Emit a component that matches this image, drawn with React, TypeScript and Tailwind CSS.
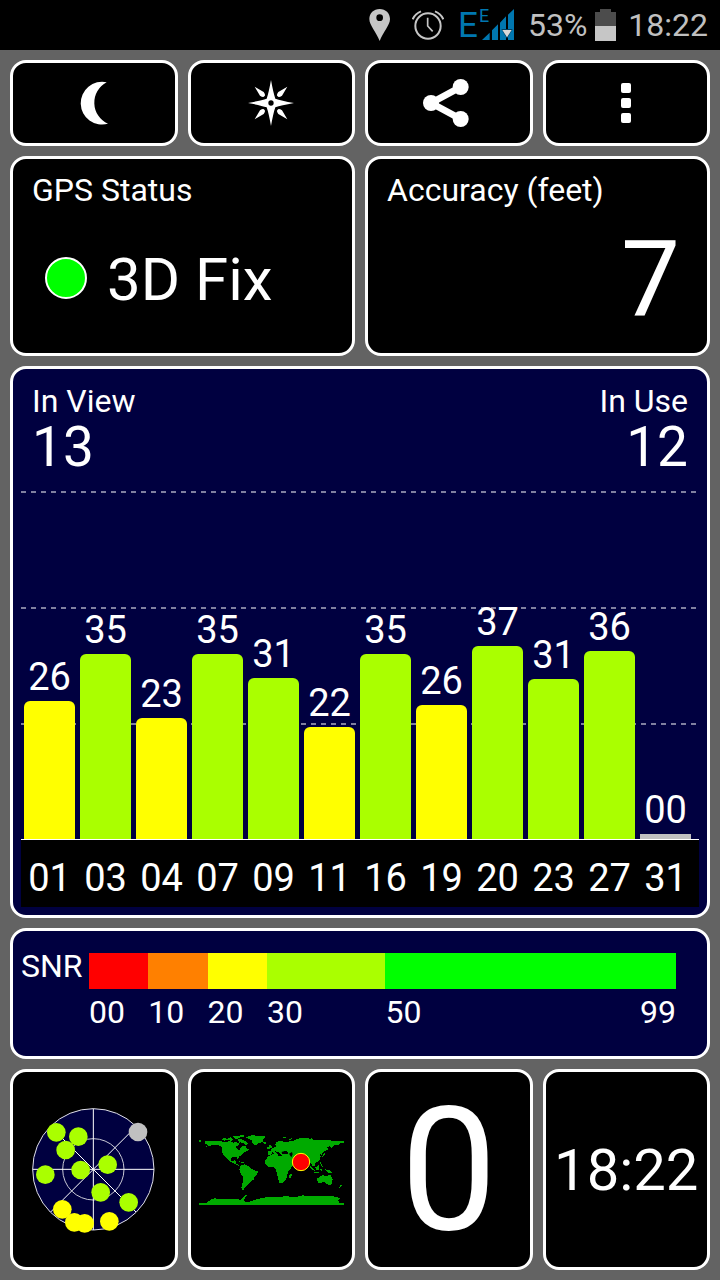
import type { ReactNode } from 'react';

const satellites = [
  { id: '01', snr: '26', height: 138, color: 'bg-[#ffff00]' },
  { id: '03', snr: '35', height: 185, color: 'bg-[#aaff00]' },
  { id: '04', snr: '23', height: 121, color: 'bg-[#ffff00]' },
  { id: '07', snr: '35', height: 185, color: 'bg-[#aaff00]' },
  { id: '09', snr: '31', height: 161, color: 'bg-[#aaff00]' },
  { id: '11', snr: '22', height: 112, color: 'bg-[#ffff00]' },
  { id: '16', snr: '35', height: 185, color: 'bg-[#aaff00]' },
  { id: '19', snr: '26', height: 134, color: 'bg-[#ffff00]' },
  { id: '20', snr: '37', height: 193, color: 'bg-[#aaff00]' },
  { id: '23', snr: '31', height: 160, color: 'bg-[#aaff00]' },
  { id: '27', snr: '36', height: 188, color: 'bg-[#aaff00]' },
  { id: '31', snr: '00', height: 5, color: 'bg-[#c0c0c0]' },
];

const snrRanges = [
  { from: '00', span: 10, color: 'bg-[#ff0000]' },
  { from: '10', span: 10, color: 'bg-[#ff8000]' },
  { from: '20', span: 10, color: 'bg-[#ffff00]' },
  { from: '30', span: 20, color: 'bg-[#aaff00]' },
  { from: '50', to: '99', span: 49, color: 'bg-[#00ff00]' },
];

const skyDots = [
  [169, 217, '#aaff00'],
  [235, 230, '#aaff00'],
  [197, 270, '#aaff00'],
  [136, 344, '#aaff00'],
  [242, 330, '#aaff00'],
  [323, 314, '#aaff00'],
  [302, 397, '#aaff00'],
  [386, 427, '#aaff00'],
  [414, 216, '#c0c0c0'],
  [187, 448, '#ffff00'],
  [223, 487, '#ffff00'],
  [254, 490, '#ffff00'],
  [328, 484, '#ffff00'],
] as const;

function StatusBar() {
  return (
    <header className="flex h-[50px] items-center justify-end bg-black pr-3 text-[32px] leading-none text-[#c0c0c0]">
      <svg className="mr-[22px] h-8 w-[21px]" viewBox="57 27 63 96" aria-label="Location">
        <path
          fill="#c6c6c6"
          fillRule="evenodd"
          d="M89 27C71 27 58 40 58 57C58 76 79 96 89 123C99 96 120 76 120 57C120 40 107 27 89 27ZM89 43A10 10 0 1 1 89 63A10 10 0 1 1 89 43Z"
        />
      </svg>
      <svg className="mr-4 h-[30px] w-8" viewBox="187 31 96 90" fill="none" stroke="#c6c6c6" aria-label="Alarm">
        <circle cx="235" cy="79" r="38" strokeWidth="6" />
        <path d="M234 54V79L249 95" strokeWidth="5" />
        <path d="M189 59Q196 42 214 35M281 59Q274 42 256 35" strokeWidth="6" />
      </svg>
      <svg className="mr-[14px] h-8 w-[54px] overflow-visible" viewBox="330 24 162 96" fill="#0077b0" aria-label="Signal">
        <text x="324" y="107" fontSize="105" fontFamily="Roboto">E</text>
        <text x="387" y="63" fontSize="54" fontFamily="Roboto">E</text>
        <path d="M396 117L419 95V117ZM426 117V88L444 70V117ZM450 117V65L468 46V117ZM474 117V41L492 24V117Z" />
        <path d="M454 84H488L471 113Z" fill="#003f60" />
        <path d="M457 87H485L471 109Z" fill="#d8d8d8" />
      </svg>
      <span>53%</span>
      <svg className="mr-3 ml-2 h-8 w-[21px]" viewBox="0 0 21 32" aria-label="Battery">
        <path d="M0 3H5V0H16V3H21V17H0Z" fill="#4c4c4c" />
        <path d="M0 17H21V32H0Z" fill="#c6c6c6" />
      </svg>
      <span>18:22</span>
    </header>
  );
}

function Toolbar() {
  const button = 'flex h-[86px] items-center justify-center rounded-2xl border-3 border-white bg-black';
  return (
    <nav className="grid grid-cols-4 gap-[10px]">
      <button className={button} aria-label="Night mode">
        <svg className="h-[45px] w-7 overflow-visible" viewBox="237 92 85 135" fill="white">
          <path d="M318 95A65 65 0 1 0 322 221A70 70 0 0 1 318 95Z" />
        </svg>
      </button>
      <button className={button} aria-label="Compass">
        <svg className="size-[46px]" viewBox="-69 -69 138 138" fill="white">
          <path
            fillRule="evenodd"
            d="M0 -69Q7 -30 13 -13Q30 -7 69 0Q30 7 13 13Q7 30 0 69Q-7 30 -13 13Q-30 7 -69 0Q-30 -7 -13 -13Q-7 -30 0 -69ZM0 -8A8 8 0 1 0 0 8A8 8 0 1 0 0 -8Z"
          />
          <path d="M-49 -49L-22 -33Q-15 -23 -20 -20Q-23 -15 -33 -22Z" />
          <path d="M49 -49L22 -33Q15 -23 20 -20Q23 -15 33 -22Z" />
          <path d="M-49 49L-22 33Q-15 23 -20 20Q-23 15 -33 22Z" />
          <path d="M49 49L22 33Q15 23 20 20Q23 15 33 22Z" />
        </svg>
      </button>
      <button className={button} aria-label="Share">
        <svg className="h-12 w-[52px]" viewBox="188 87 156 144" fill="white">
          <path d="M301 111L212 159L301 207" fill="none" stroke="white" strokeWidth="20" />
          <circle cx="212" cy="159" r="24" />
          <circle cx="301" cy="111" r="24" />
          <circle cx="301" cy="207" r="24" />
        </svg>
      </button>
      <button className={button} aria-label="More options">
        <svg className="h-10 w-[10px]" viewBox="0 0 10 40" fill="white">
          <rect width="10" height="10" rx="2" />
          <rect y="15" width="10" height="10" rx="2" />
          <rect y="30" width="10" height="10" rx="2" />
        </svg>
      </button>
    </nav>
  );
}

function Summary() {
  const card = 'h-[200px] rounded-2xl border-3 border-white bg-black px-[19px] pt-[11px]';
  return (
    <section className="grid grid-cols-2 gap-[10px]">
      <div className={card}>
        <h2 className="text-[32px] leading-10">GPS Status</h2>
        <div className="mt-8 flex h-[72px] items-center gap-5 pl-[13px]">
          <span className="size-[42px] rounded-full border-2 border-white bg-[#00ff00]" />
          <span className="pt-1 text-[60px] leading-[72px]">3D Fix</span>
        </div>
      </div>
      <div className={card}>
        <h2 className="text-[32px] leading-10">Accuracy (feet)</h2>
        <p className="mt-8 pt-[2px] pr-2 text-right text-[105px] leading-[72px]">7</p>
      </div>
    </section>
  );
}

function GridLine() {
  return (
    <div className="h-[2px] bg-[repeating-linear-gradient(90deg,#8080a0_0_5px,transparent_5px_10px)]" />
  );
}

function SatelliteChart() {
  return (
    <section className="rounded-2xl border-3 border-white bg-[#000040] px-2 pb-2">
      <div className="flex h-[122px] justify-between px-[11px] pt-3">
        <div>
          <h2 className="text-[32px] leading-10">In View</h2>
          <p className="text-[55px] leading-[52px]">13</p>
        </div>
        <div className="text-right">
          <h2 className="text-[32px] leading-10">In Use</h2>
          <p className="text-[55px] leading-[52px]">12</p>
        </div>
      </div>
      <div className="relative h-[348px]">
        <div className="absolute inset-0 grid grid-rows-3">
          <GridLine />
          <GridLine />
          <GridLine />
        </div>
        <div className="relative flex h-full items-end gap-[5px] pr-2 pl-[3px]">
          {satellites.map((sat) => (
            <div key={sat.id} className="flex-1 text-center">
              <div className="mb-1 text-[38px] leading-10">{sat.snr}</div>
              <div
                className={`${sat.color} ${sat.height > 10 ? 'rounded-t-md' : ''}`}
                style={{ height: sat.height }}
              />
            </div>
          ))}
        </div>
      </div>
      <div className="flex h-[68px] items-center gap-[5px] border-t border-white bg-black pt-[9px] pr-2 pl-[3px]">
        {satellites.map((sat) => (
          <div key={sat.id} className="flex-1 text-center text-[38px] leading-10">
            {sat.id}
          </div>
        ))}
      </div>
    </section>
  );
}

function SnrScale() {
  return (
    <section className="flex h-[131px] rounded-2xl border-3 border-white bg-[#000040] pt-[22px] pr-[31px] pl-2 text-[32px]">
      <h2 className="w-[68px] leading-[26px]">SNR</h2>
      <div className="flex flex-1">
        {snrRanges.map((range) => (
          <div key={range.from} className="basis-0" style={{ flexGrow: range.span }}>
            <div className={`h-9 ${range.color}`} />
            <div className="flex justify-between leading-[46px]">
              <span>{range.from}</span>
              {range.to && <span>{range.to}</span>}
            </div>
          </div>
        ))}
      </div>
    </section>
  );
}

function SkyView() {
  return (
    <svg className="size-[123px] overflow-visible" viewBox="96 144 369 369" aria-label="Sky view">
      <circle cx="280" cy="328" r="182" fill="#000040" stroke="#e0e0e8" strokeWidth="3" />
      <circle cx="280" cy="328" r="92" fill="none" stroke="#c8c8d4" strokeWidth="3" />
      <path d="M280 146V510M98 328H462M152 200L408 456M408 200L152 456" stroke="white" strokeWidth="3" />
      {skyDots.map(([x, y, fill]) => (
        <circle key={`${x}-${y}`} cx={x} cy={y} r="28" fill={fill} />
      ))}
    </svg>
  );
}

function WorldMap() {
  return (
    <svg className="h-[70px] w-[145px]" viewBox="39 45 435 210" aria-label="World map">
      <g fill="#00aa00" shapeRendering="crispEdges">
        <path d="M39 61H46V66H39ZM57 65L66 62L84 63L104 64L118 66L132 63L142 68L150 64L156 70L162 66L158 76L150 80L154 88L160 92L164 84L170 78L178 78L182 86L190 88L184 94L174 96L168 104L158 110L157 119L152 112L140 112L134 118L138 124L146 120L150 124L150 130L158 136L166 138L160 139L150 133L134 126L124 118L112 106L107 92L108 82L98 76L84 74L72 78L60 80L68 75L57 72Z" />
        <path d="M106 58L116 53L124 57L134 52L142 58L136 62L124 60L114 62ZM140 50L152 47L172 46L176 49L160 53L152 57L144 54ZM152 59L166 57L178 64L186 72L180 77L172 70L164 67ZM158 124L168 125L176 129L166 128Z" />
        <path d="M180 52L196 46L238 48L236 54L230 60L232 65L218 70L208 76L200 70L196 60L186 55ZM232 67L241 66L240 71L234 71Z" />
        <path d="M163 137L176 133L188 138L196 146L206 151L216 154L212 164L206 170L202 180L192 186L186 194L178 200L173 206L177 211L168 211L166 202L170 188L172 172L164 162L160 148Z" />
        <path d="M248 108L262 102L272 102L276 108L288 108L300 109L304 120L311 132L322 133L314 146L305 156L304 170L298 180L290 189L280 188L275 172L272 156L268 144L256 140L245 140L238 130L238 120ZM310 166L318 160L316 172L311 178Z" />
        <path d="M246 93L256 92L254 87L264 82L270 80L268 73L272 66L282 61L292 65L300 68L310 64L324 62L336 56L350 54L366 53L372 57L390 60L410 60L430 61L450 63L474 62V70L462 70L456 75L444 76L437 84L432 78L424 82L426 88L414 94L408 100L410 106L400 101L404 110L400 122L390 128L386 132L388 140L380 138L376 130L366 132L346 152L334 130L324 128L314 134L304 126L300 112L290 108L288 102L300 101L304 104L308 96L296 92L288 98L286 106L276 96L268 94L278 106L272 106L260 96L256 104L246 105Z" />
        <path d="M248 77L255 74L258 84L250 86ZM244 82H248V86H244ZM290 51L302 50L300 54L290 55ZM306 60L320 54L314 60ZM370 52L382 54L376 57ZM414 96L418 104L406 112L412 104ZM372 138L386 152L380 151L374 144ZM388 142L398 136L400 148L390 152ZM402 122L406 130L410 140L404 136ZM403 148L410 144L406 156ZM418 148L430 151L438 158L426 158ZM384 155L400 157V159L384 158Z" />
        <path d="M393 176L402 170L410 166L424 168L427 164L433 164L440 178L438 190L432 195L422 192L416 186L396 190ZM462 197L470 191L468 198L460 204Z" />
        <path d="M39 249L62 248L76 238L84 235L112 238L134 236L164 239L170 232L184 223L178 232L174 239L176 246L196 244L210 238L240 232L270 231L300 229L330 231L350 226L380 229L410 227L450 230L464 235L456 242L460 248L474 249V255H39Z" />
      </g>
      <path d="M309 101L318 96L320 103L316 112ZM286 96L294 94L300 98L290 101Z" fill="black" />
      <circle cx="345" cy="126" r="26" fill="#ff0000" stroke="#ffff00" strokeWidth="3" />
    </svg>
  );
}

function Tile({ children }: { children: ReactNode }) {
  return (
    <div className="flex h-[201px] items-center justify-center rounded-2xl border-3 border-white bg-black">
      {children}
    </div>
  );
}

export default function App() {
  return (
    <div className="min-h-screen bg-[#636363] font-['Roboto',sans-serif] text-white">
      <StatusBar />
      <main className="flex flex-col gap-[10px] p-[10px]">
        <Toolbar />
        <Summary />
        <SatelliteChart />
        <SnrScale />
        <section className="grid grid-cols-4 gap-[10px]">
          <Tile>
            <SkyView />
          </Tile>
          <Tile>
            <WorldMap />
          </Tile>
          <Tile>
            <span className="text-[172px] leading-none">0</span>
          </Tile>
          <Tile>
            <span className="text-[58px] leading-none">18:22</span>
          </Tile>
        </section>
      </main>
    </div>
  );
}
